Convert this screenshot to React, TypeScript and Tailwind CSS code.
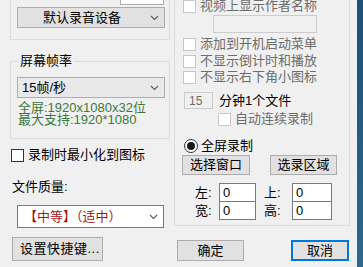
import React from 'react'

const font = 'font-["Liberation_Sans","Noto_Sans_CJK_SC",sans-serif]'

function Chevron() {
  return (
    <svg width="9" height="6" viewBox="0 0 9 6" className="shrink-0">
      <path d="M1 1 L4.5 4.5 L8 1" fill="none" stroke="#5a5a5a" strokeWidth="1.1" />
    </svg>
  )
}

function Check({ disabled }: { disabled?: boolean }) {
  return <span className={disabled ? 'w-[13px] h-[13px] shrink-0 border border-[#c8c8c8] bg-white' : 'w-[13px] h-[13px] shrink-0 border border-[#333333] bg-white'} />
}

function CheckRow({ label, disabled, className }: { label: string; disabled?: boolean; className?: string }) {
  return (
    <div className={`flex items-center gap-[4px] h-[14px] ${className || ''}`}>
      <Check disabled={disabled} />
      <span className={disabled ? 'text-[#6d6d6d] whitespace-nowrap' : 'text-black whitespace-nowrap'}>{label}</span>
    </div>
  )
}

export default function App() {
  return (
    <div className={`w-[363px] h-[267px] bg-[#f0f0f0] flex overflow-hidden text-[13px] leading-[14px] ${font}`}>
      {/* left column */}
      <div className="w-[174px] shrink-0 flex flex-col">
        <div className="ml-[10px] w-[160px] h-[40px] border-x border-b border-[#dcdcdc] flex flex-col">
          <div className="ml-[109px] w-[44px] h-[5px] border-x border-b border-[#adadad] bg-white" />
          <div className="mt-[2px] ml-[6px] w-[148px] h-[21px] border border-[#adadad] bg-[#e1e1e1] flex items-center justify-between pr-[5px]">
            <span className="pl-[25px]">默认录音设备</span>
            <Chevron />
          </div>
        </div>

        <div className="relative mt-[21px] ml-[10px] w-[160px] h-[78px] border border-[#dcdcdc] flex flex-col">
          <span className="absolute -top-[8px] left-[7px] bg-[#f0f0f0] px-[2px]">屏幕帧率</span>
          <div className="mt-[15px] ml-[6px] w-[148px] h-[21px] border border-[#adadad] bg-[#e9e9e9] flex items-center justify-between pr-[5px]">
            <span className="pl-[4px]">15帧/秒</span>
            <Chevron />
          </div>
          <div className="mt-[4px] ml-[7px] leading-[12px] text-[#3b7a3b]">
            <div>全屏:1920x1080x32位</div>
            <div>最大支持:1920*1080</div>
          </div>
        </div>

        <CheckRow label="录制时最小化到图标" className="mt-[9px] ml-[11px]" />

        <div className="mt-[18px] ml-[12px]">文件质量:</div>

        <div className="mt-[11px] ml-[17px] w-[147px] h-[23px] border border-[#7a7a7a] bg-white flex items-center justify-between pr-[5px]">
          <span className="pl-[6px] text-[#a01818]">【中等】（适中）</span>
          <Chevron />
        </div>

        <button className="mt-[9px] ml-[12px] w-[91px] h-[24px] border border-[#adadad] bg-[#e1e1e1] flex items-center pl-[7px] tracking-[0.5px]">
          设置快捷键...
        </button>
      </div>

      {/* right column */}
      <div className="w-[183px] shrink-0 flex flex-col">
        <div className="w-[176px] h-[226px] border-x border-b border-[#dcdcdc] flex flex-col">
          <CheckRow label="视频上显示作者名称" disabled className="-mt-[1px] ml-[8px]" />
          <div className="mt-[2px] ml-[38px] w-[104px] h-[18px] border border-[#cccccc] bg-[#f0f0f0]" />
          <CheckRow label="添加到开机启动菜单" disabled className="mt-[4px] ml-[8px]" />
          <CheckRow label="不显示倒计时和播放" disabled className="mt-[3px] ml-[8px]" />
          <CheckRow label="不显示右下角小图标" disabled className="mt-[2px] ml-[8px]" />

          <div className="mt-[8px] ml-[9px] flex items-center gap-[6px]">
            <div className="w-[29px] h-[17px] border border-[#cccccc] bg-[#f0f0f0] flex items-center pl-[4px] text-[#6d6d6d] text-[12px]">15</div>
            <span>分钟1个文件</span>
          </div>
          <CheckRow label="自动连续录制" disabled className="mt-[3px] ml-[43px]" />

          <div className="mt-[12px] ml-[9px] flex items-center gap-[3px] h-[15px]">
            <span className="w-[14px] h-[14px] rounded-full border border-[#333333] bg-white flex items-center justify-center">
              <span className="w-[8px] h-[8px] rounded-full bg-[#1a1a1a]" />
            </span>
            <span>全屏录制</span>
          </div>

          <div className="mt-[2px] ml-[7px] flex gap-[20px]">
            <button className="w-[68px] h-[20px] border border-[#adadad] bg-[#e1e1e1] flex items-center justify-center">选择窗口</button>
            <button className="w-[67px] h-[20px] border border-[#adadad] bg-[#e1e1e1] flex items-center justify-center">选录区域</button>
          </div>

          <div className="mt-[8px] ml-[20px] grid grid-cols-[24px_37px_36px_40px] items-center">
            <span>左:</span>
            <div className="h-[19px] border border-[#7a7a7a] bg-white pl-[3px] leading-[17px]">0</div>
            <span className="pl-[8px]">上:</span>
            <div className="h-[19px] border border-[#7a7a7a] bg-white pl-[3px] leading-[17px]">0</div>
            <span className="-mt-[1px]">宽:</span>
            <div className="-mt-[1px] h-[19px] border border-[#7a7a7a] bg-white pl-[3px] leading-[17px]">0</div>
            <span className="-mt-[1px] pl-[8px]">高:</span>
            <div className="-mt-[1px] h-[19px] border border-[#7a7a7a] bg-white pl-[3px] leading-[17px]">0</div>
          </div>
        </div>

        <div className="mt-[14px] ml-[3px] flex">
          <button className="w-[67px] h-[21px] border border-[#adadad] bg-[#e1e1e1] flex items-center justify-center">确定</button>
          <button className="ml-[47px] w-[58px] h-[21px] border-2 border-[#0078d7] bg-[#e1e1e1] flex items-center justify-center">取消</button>
        </div>
      </div>

      {/* window edge */}
      <div className="w-[6px] shrink-0 bg-gradient-to-b from-[#1d4f78] to-[#2a6a8c]" />
    </div>
  )
}
